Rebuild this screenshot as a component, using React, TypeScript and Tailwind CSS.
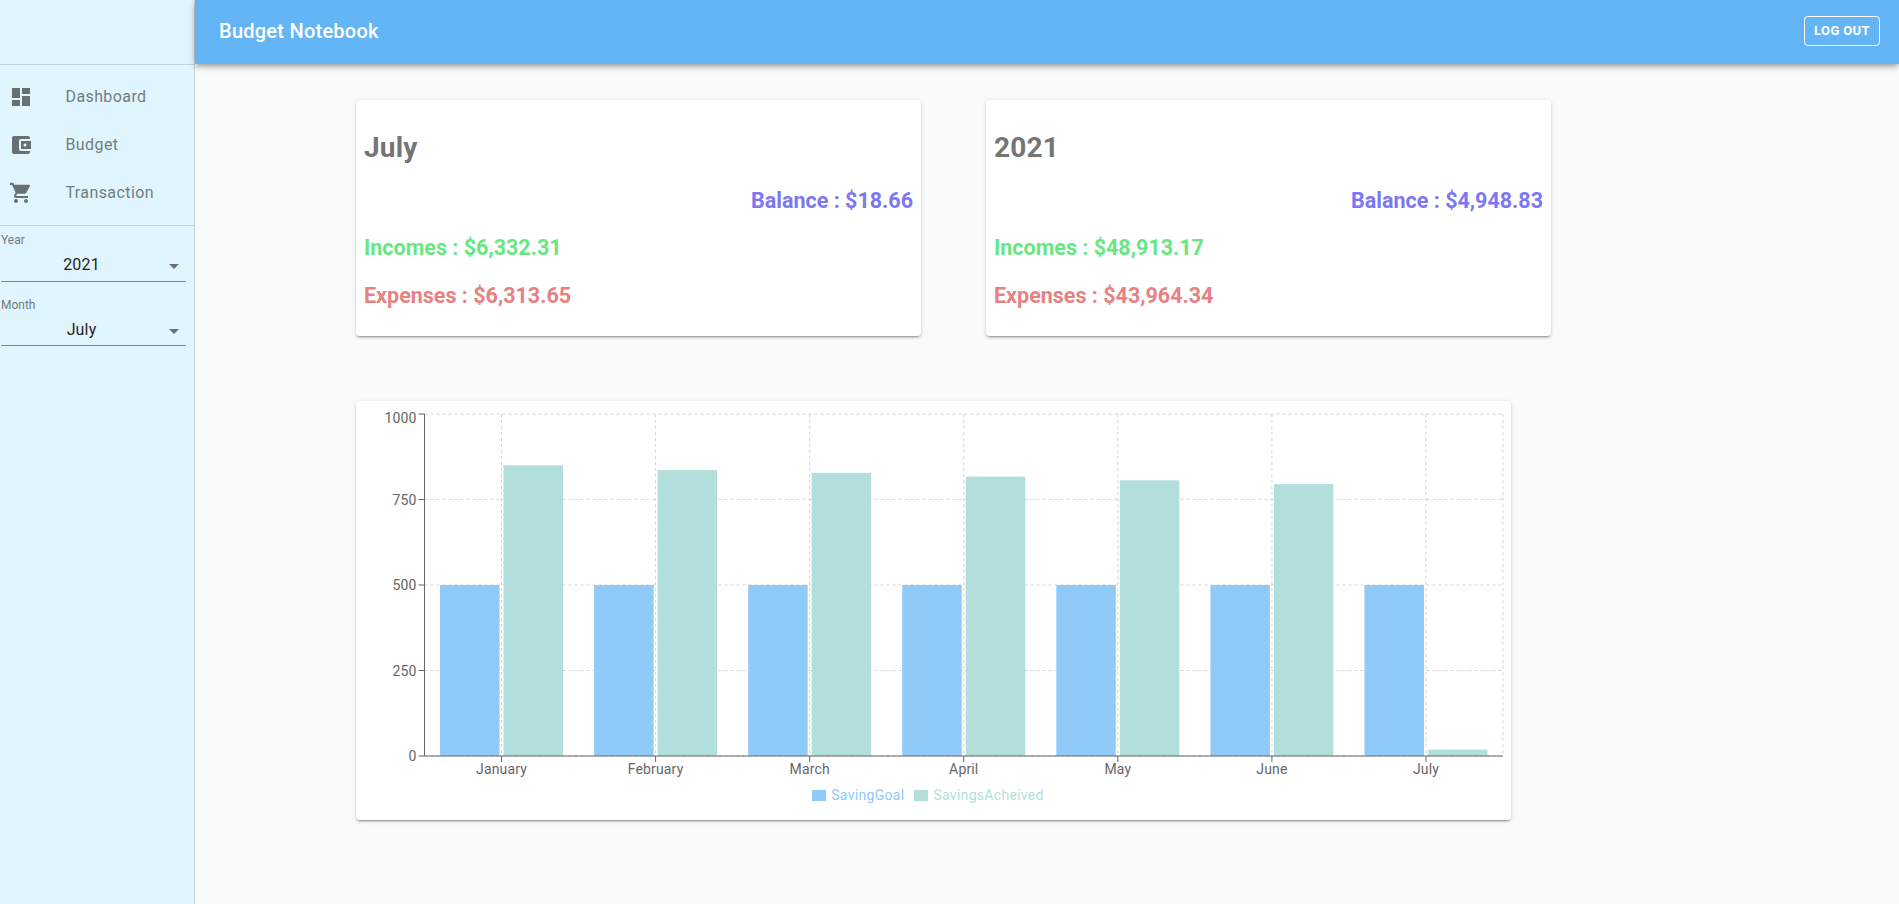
const NAV_ITEMS = [
  {
    label: "Dashboard",
    path: "M3 13h8V3H3v10zm0 8h8v-6H3v6zm10 0h8V11h-8v10zm0-18v6h8V3h-8z",
  },
  {
    label: "Budget",
    path: "M21 18v1c0 1.1-.9 2-2 2H5c-1.11 0-2-.9-2-2V5c0-1.1.89-2 2-2h14c1.1 0 2 .9 2 2v1h-9c-1.11 0-2 .9-2 2v8c0 1.1.89 2 2 2h9zm-9-2h10V8H12v8zm4-2.5c-.83 0-1.5-.67-1.5-1.5s.67-1.5 1.5-1.5 1.5.67 1.5 1.5-.67 1.5-1.5 1.5z",
  },
  {
    label: "Transaction",
    path: "M7 18c-1.1 0-1.99.9-1.99 2S5.9 22 7 22s2-.9 2-2-.9-2-2-2zM1 2v2h2l3.6 7.59-1.35 2.45c-.16.28-.25.61-.25.96 0 1.1.9 2 2 2h12v-2H7.42c-.14 0-.25-.11-.25-.25l.03-.12.9-1.83h7.45c.75 0 1.41-.41 1.75-1.03l3.58-6.47c.08-.14.12-.31.12-.48 0-.55-.45-1-1-1H5.21l-.94-2H1zm16 16c-1.1 0-1.99.9-1.99 2s.89 2 1.99 2 2-.9 2-2-.9-2-2-2z",
  },
];

const SAVINGS = [
  { month: "January", goal: 500, achieved: 850 },
  { month: "February", goal: 500, achieved: 836 },
  { month: "March", goal: 500, achieved: 828 },
  { month: "April", goal: 500, achieved: 817 },
  { month: "May", goal: 500, achieved: 806 },
  { month: "June", goal: 500, achieved: 795 },
  { month: "July", goal: 500, achieved: 18.66 },
];

// Chart geometry, in the card's own pixels
const AXIS_LEFT = 68.5;
const AXIS_RIGHT = 1147;
const AXIS_TOP = 13;
const AXIS_BOTTOM = 355;
const BAND = (AXIS_RIGHT - AXIS_LEFT) / 7;
const BAR_WIDTH = 59.5;

function yFor(value: number) {
  return AXIS_BOTTOM - (value / 1000) * (AXIS_BOTTOM - AXIS_TOP);
}

function SelectField({ label, value }: { label: string; value: string }) {
  return (
    <div className="ml-px w-[185px]">
      <div className="text-[12px] leading-[14px] text-[#6f7b80]">{label}</div>
      <div className="relative h-[34.5px] border-b border-[#7b858a] pr-6 pt-[8px] text-center text-[16px] leading-[19px] tracking-[0.15px] text-[#1f2326]">
        {value}
        <svg
          viewBox="0 0 24 24"
          className="absolute right-0 top-[7px] h-6 w-6 fill-[#696f73]"
        >
          <path d="M7 10l5 5 5-5z" />
        </svg>
      </div>
    </div>
  );
}

function Sidebar() {
  return (
    <aside className="flex w-[195px] shrink-0 flex-col border-r border-[#c5d4dc] bg-[#e1f5fe]">
      <div className="h-[65px] shrink-0 border-b border-[#c5d4dc]" />
      <nav className="border-b border-[#c5d4dc] py-2">
        {NAV_ITEMS.map((item) => (
          <div key={item.label} className="flex h-12 items-center pl-[9px]">
            <svg viewBox="0 0 24 24" className="h-6 w-6 shrink-0 fill-[#697074]">
              <path d={item.path} />
            </svg>
            <span className="ml-[32.5px] text-[16px] tracking-[0.4px] text-[#727d82]">
              {item.label}
            </span>
          </div>
        ))}
      </nav>
      <div className="flex flex-col gap-4 pt-[7px]">
        <SelectField label="Year" value="2021" />
        <SelectField label="Month" value="July" />
      </div>
    </aside>
  );
}

function SummaryCard({
  title,
  balance,
  incomes,
  expenses,
}: {
  title: string;
  balance: string;
  incomes: string;
  expenses: string;
}) {
  return (
    <div className="h-[236px] w-[565px] rounded-[4px] bg-white px-2 pt-[29px] shadow-[0_3px_1px_-2px_rgba(0,0,0,0.2),0_2px_2px_0_rgba(0,0,0,0.14),0_1px_5px_0_rgba(0,0,0,0.12)]">
      <h2 className="text-[28px] font-bold leading-[38px] tracking-[0.2px] text-[#757575]">{title}</h2>
      <p className="mt-[18px] text-right text-[21.5px] font-bold leading-[32px] text-[#7b78f2]">
        Balance : {balance}
      </p>
      <p className="mt-[15px] text-[21.5px] font-bold leading-[32px] text-[#68e682]">
        Incomes : {incomes}
      </p>
      <p className="mt-[16px] text-[21.5px] font-bold leading-[32px] text-[#e68282]">
        Expenses : {expenses}
      </p>
    </div>
  );
}

function SavingsChart() {
  const ticks = [0, 250, 500, 750, 1000];
  return (
    <svg
      width={1155}
      height={380}
      className="block font-['Roboto',sans-serif] text-[14px] tracking-[0.15px]"
    >
      {/* grid */}
      <g stroke="#d4d4d4" strokeDasharray="3 3" fill="none">
        {ticks.map((t) => (
          <line key={t} x1={AXIS_LEFT} x2={AXIS_RIGHT} y1={yFor(t)} y2={yFor(t)} />
        ))}
        {SAVINGS.map((d, i) => (
          <line
            key={d.month}
            x1={AXIS_LEFT + BAND * (i + 0.5)}
            x2={AXIS_LEFT + BAND * (i + 0.5)}
            y1={AXIS_TOP}
            y2={AXIS_BOTTOM}
          />
        ))}
        <line x1={AXIS_RIGHT} x2={AXIS_RIGHT} y1={AXIS_TOP} y2={AXIS_BOTTOM} />
      </g>
      {/* bars */}
      {SAVINGS.map((d, i) => {
        const center = AXIS_LEFT + BAND * (i + 0.5);
        return (
          <g key={d.month}>
            <rect
              x={center - 2 - BAR_WIDTH}
              y={yFor(d.goal)}
              width={BAR_WIDTH}
              height={AXIS_BOTTOM - yFor(d.goal)}
              fill="#90caf9"
            />
            <rect
              x={center + 2}
              y={yFor(d.achieved)}
              width={BAR_WIDTH}
              height={AXIS_BOTTOM - yFor(d.achieved)}
              fill="#b2dfdb"
            />
          </g>
        );
      })}
      {/* axes */}
      <g stroke="#666" fill="none">
        <line x1={AXIS_LEFT} x2={AXIS_LEFT} y1={AXIS_TOP} y2={AXIS_BOTTOM} />
        <line x1={AXIS_LEFT} x2={AXIS_RIGHT} y1={AXIS_BOTTOM} y2={AXIS_BOTTOM} />
        {ticks.map((t) => (
          <line key={t} x1={AXIS_LEFT - 6} x2={AXIS_LEFT} y1={yFor(t)} y2={yFor(t)} />
        ))}
        {SAVINGS.map((d, i) => (
          <line
            key={d.month}
            x1={AXIS_LEFT + BAND * (i + 0.5)}
            x2={AXIS_LEFT + BAND * (i + 0.5)}
            y1={AXIS_BOTTOM}
            y2={AXIS_BOTTOM + 6}
          />
        ))}
      </g>
      {/* labels */}
      <g fill="#666">
        {ticks.map((t) => (
          <text key={t} x={AXIS_LEFT - 8} y={t === 1000 ? yFor(t) + 9 : yFor(t) + 5} textAnchor="end">
            {t}
          </text>
        ))}
        {SAVINGS.map((d, i) => (
          <text key={d.month} x={AXIS_LEFT + BAND * (i + 0.5)} y={AXIS_BOTTOM + 18} textAnchor="middle">
            {d.month}
          </text>
        ))}
      </g>
    </svg>
  );
}

function Legend() {
  return (
    <div className="mt-[6px] flex justify-center pr-[11px] text-[14px] leading-[16px] tracking-[0.3px]">
      <span className="flex items-center text-[#90caf9]">
        <span className="mr-[5px] h-[11px] w-[14px] bg-[#90caf9]" />
        SavingGoal
      </span>
      <span className="ml-[10px] flex items-center text-[#b2dfdb]">
        <span className="mr-[5px] h-[11px] w-[14px] bg-[#b2dfdb]" />
        SavingsAcheived
      </span>
    </div>
  );
}

export default function App() {
  return (
    <div className="flex h-[904px] overflow-hidden bg-[#fafafa] font-['Roboto',sans-serif]">
      <Sidebar />
      <div className="flex min-w-0 flex-1 flex-col">
        <header className="flex h-16 shrink-0 items-center justify-between bg-[#64b5f6] pb-[2px] pl-6 pr-[19px] shadow-[0_2px_4px_-1px_rgba(0,0,0,0.2),0_4px_5px_0_rgba(0,0,0,0.14),0_1px_10px_0_rgba(0,0,0,0.12)]">
          <h1 className="text-[20px] font-medium tracking-[0.25px] text-white">Budget Notebook</h1>
          <button className="h-[30px] w-[76px] rounded-[4px] border border-white text-[13px] font-bold uppercase tracking-[0.37px] text-white">
            Log out
          </button>
        </header>
        <main className="pl-[161px] pt-[36px]">
          <div className="flex gap-[65px]">
            <SummaryCard title="July" balance="$18.66" incomes="$6,332.31" expenses="$6,313.65" />
            <SummaryCard title="2021" balance="$4,948.83" incomes="$48,913.17" expenses="$43,964.34" />
          </div>
          <div className="mt-[65px] h-[419px] w-[1155px] rounded-[4px] bg-white shadow-[0_3px_1px_-2px_rgba(0,0,0,0.2),0_2px_2px_0_rgba(0,0,0,0.14),0_1px_5px_0_rgba(0,0,0,0.12)]">
            <SavingsChart />
            <Legend />
          </div>
        </main>
      </div>
    </div>
  );
}
